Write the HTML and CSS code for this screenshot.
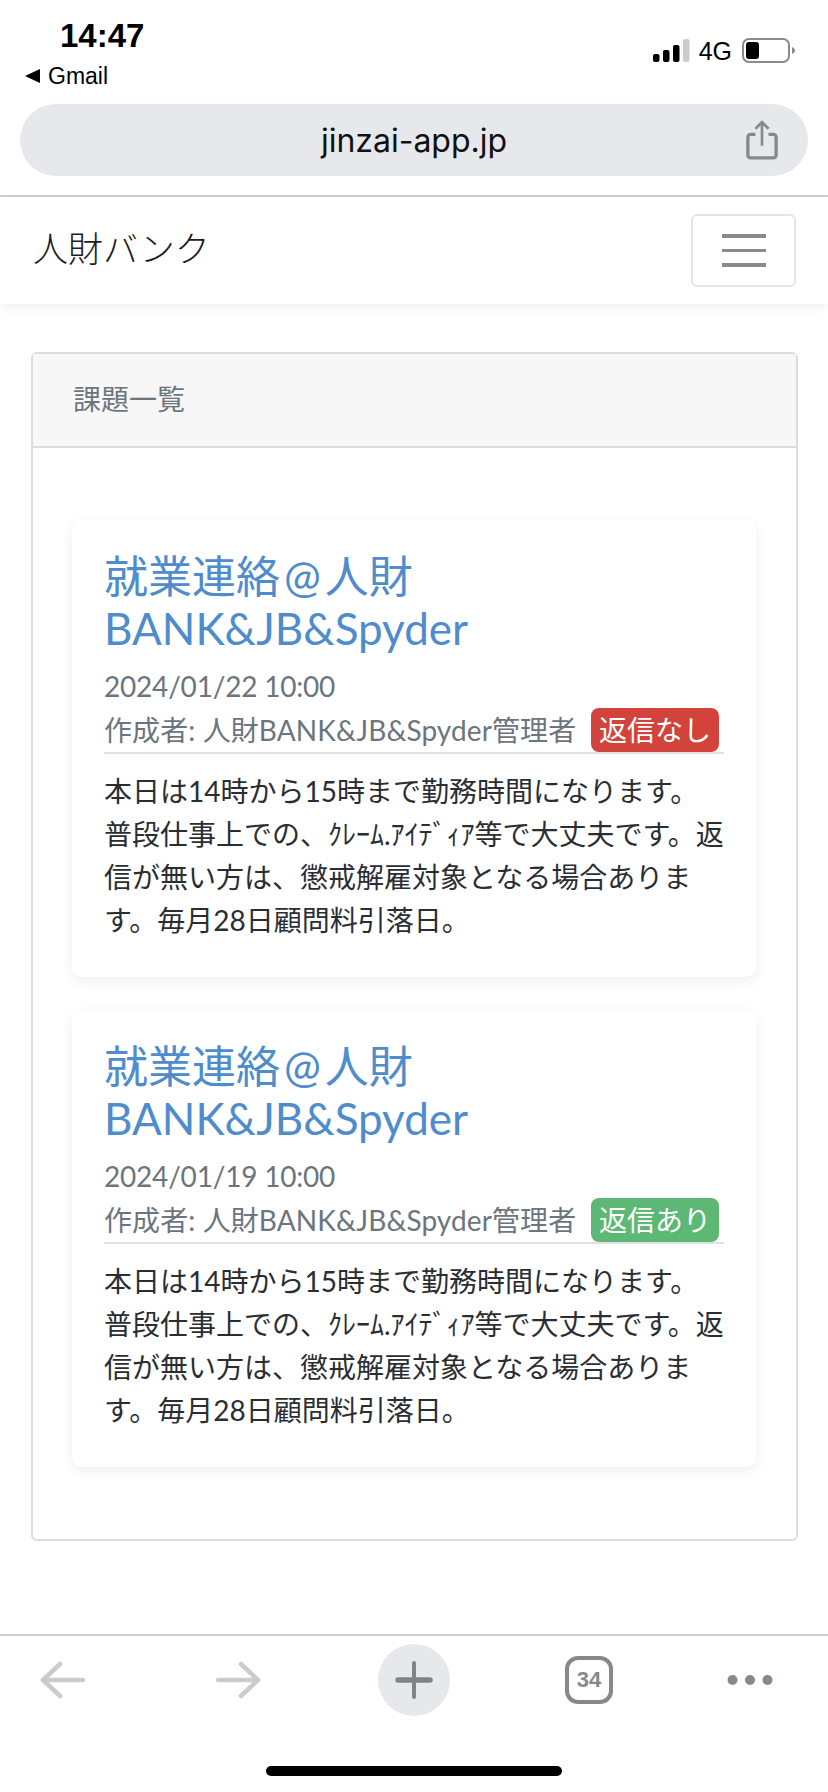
FILE: index.html
```html
<!DOCTYPE html>
<html lang="ja">
<head>
<meta charset="utf-8">
<title>人財バンク</title>
<link rel="stylesheet" href="styles.css">
</head>
<body>
<div class="page">
  <header class="status">
    <div class="status-left">
      <div class="clock">14:47</div>
      <div class="back-app"><span class="back-tri"></span>Gmail</div>
    </div>
    <div class="status-right">
      <svg class="signal" width="37" height="24" viewBox="0 0 37 24"><rect x="0" y="15" width="6.500" height="8" rx="2" fill="#000"/><rect x="10" y="11" width="6.500" height="12" rx="2" fill="#000"/><rect x="20" y="6" width="6.500" height="17" rx="2" fill="#000"/><rect x="30" y="0" width="6.500" height="23" rx="2" fill="#ccc"/></svg>
      <span class="net">4G</span>
      <svg class="battery" width="53" height="26" viewBox="0 0 53 26"><rect x="1" y="1" width="46" height="23" rx="6" fill="none" stroke="#8a8a8a" stroke-width="2"/><rect x="4" y="4" width="13" height="17" rx="3" fill="#000"/><path d="M50 9c2 1 3 2 3 3.500s-1 2.500-3 3.500z" fill="#8a8a8a"/></svg>
    </div>
  </header>
  <div class="url-wrap">
    <div class="url-bar">
      <span class="url">jinzai-app.jp</span>
      <svg class="share" width="32" height="40" viewBox="0 0 34 42" fill="none" stroke="#85888c" stroke-width="3.500"><path d="M10 15H5a3 3 0 0 0-3 3v19a3 3 0 0 0 3 3h24a3 3 0 0 0 3-3V18a3 3 0 0 0-3-3h-5"/><path d="M17 27V3M10 9l7-7 7 7" stroke-width="2.800"/></svg>
    </div>
  </div>
  <nav class="navbar">
    <span class="brand">人財バンク</span>
    <button class="toggler" type="button"><span class="bar"></span><span class="bar"></span><span class="bar"></span></button>
  </nav>
  <main class="content">
    <section class="panel">
      <div class="panel-head">課題一覧</div>
      <div class="panel-body">
        <article class="item">
          <a class="item-title"><span>就業連絡</span><span class="at">@</span><span>人財</span><span>BANK&amp;JB&amp;Spyder</span></a>
          <div class="meta">2024/01/22 10:00</div>
          <div class="author"><span class="by">作成者: 人財BANK&amp;JB&amp;Spyder管理者</span><span class="badge badge-red">返信なし</span></div>
          <p class="item-text">本日は14時から15時まで勤務時間になります。普段仕事上での、ｸﾚｰﾑ.ｱｲﾃﾞｨｱ等で大丈夫です。返信が無い方は、懲戒解雇対象となる場合あります。毎月28日顧問料引落日。</p>
        </article>
        <article class="item">
          <a class="item-title"><span>就業連絡</span><span class="at">@</span><span>人財</span><span>BANK&amp;JB&amp;Spyder</span></a>
          <div class="meta">2024/01/19 10:00</div>
          <div class="author"><span class="by">作成者: 人財BANK&amp;JB&amp;Spyder管理者</span><span class="badge badge-green">返信あり</span></div>
          <p class="item-text">本日は14時から15時まで勤務時間になります。普段仕事上での、ｸﾚｰﾑ.ｱｲﾃﾞｨｱ等で大丈夫です。返信が無い方は、懲戒解雇対象となる場合あります。毎月28日顧問料引落日。</p>
        </article>
      </div>
    </section>
  </main>
  <footer class="toolbar">
    <div class="tools">
      <svg width="46" height="38" viewBox="0 0 46 38" fill="none" stroke="#cbcbcb" stroke-width="4.500" stroke-linecap="round" stroke-linejoin="round"><path d="M43 19H3M20 3L3 19l17 16"/></svg>
      <svg width="46" height="38" viewBox="0 0 46 38" fill="none" stroke="#cbcbcb" stroke-width="4.500" stroke-linecap="round" stroke-linejoin="round"><path d="M3 19h40M26 3l17 16-17 16"/></svg>
      <div class="plus"><svg width="38" height="38" viewBox="0 0 38 38" fill="none" stroke="#80848a" stroke-width="4" stroke-linecap="round"><path d="M19 2v34"/><path d="M3 19h32" stroke-width="5.500"/></svg></div>
      <div class="tabs">34</div>
      <svg width="46" height="12" viewBox="0 0 46 12" fill="#85888d"><circle cx="5.500" cy="6" r="5"/><circle cx="23" cy="6" r="5"/><circle cx="40.500" cy="6" r="5"/></svg>
    </div>
    <div class="home-bar"></div>
  </footer>
</div>
</body>
</html>
```

FILE: styles.css
```css
* { box-sizing: border-box; }
html, body { margin: 0; padding: 0; }
body { background: #fff; color: #212529; font-family: "Lato", "Noto Sans CJK JP", sans-serif; }
.page { width: 828px; height: 1792px; display: flex; flex-direction: column; overflow: hidden; }

.status { height: 104px; padding: 20px 33px 0 25px; display: flex; justify-content: space-between; align-items: flex-start; font-family: "Liberation Sans", sans-serif; color: #000; }
.status-left { display: flex; flex-direction: column; }
.clock { font-size: 33px; font-weight: 700; line-height: 32px; margin-left: 35px; }
.back-app { display: flex; align-items: center; font-size: 23px; line-height: 24px; margin-top: 12px; }
.back-tri { width: 0; height: 0; border-style: solid; border-width: 7px 15px 7px 0; border-color: transparent #000 transparent transparent; margin-right: 8px; }
.status-right { display: flex; align-items: center; margin-top: 18px; }
.signal { margin-right: 9px; }
.net { font-size: 25px; line-height: 26px; margin-right: 10px; }

.url-wrap { height: 93px; padding: 0 20px; border-bottom: 2px solid #ccc; }
.url-bar { height: 72px; border-radius: 36px; background: #e7e8ec; display: flex; align-items: center; justify-content: center; position: relative; }
.url { font-family: "Inter", sans-serif; font-size: 32px; color: #111; }
.share { position: absolute; right: 30px; top: 16px; }

.navbar { height: 107px; display: flex; align-items: center; justify-content: space-between; padding: 0 32px 0 33px; box-shadow: 0 4px 10px rgba(0,0,0,0.06); }
.brand { font-size: 35px; font-family: "Noto Sans CJK JP", sans-serif; font-weight: 300; color: #1c1c1c; margin-top: -8px; }
.toggler { width: 105px; height: 73px; background: #fff; border: 2px solid #e5e5e5; border-radius: 6px; display: flex; flex-direction: column; align-items: center; justify-content: center; gap: 11px; padding: 0; }
.bar { display: block; width: 44px; height: 3.500px; background: #8a8a8a; }

.content { flex: 1; padding: 48px 30px 0 31px; }
.panel { border: 2px solid #dcdcdc; border-radius: 6px; height: 1189px; }
.panel-head { height: 94px; padding: 0 40px 4px; background: #f7f7f7; border-bottom: 2px solid #dcdcdc; display: flex; align-items: center; font-size: 28px; color: #6c757d; }
.panel-body { padding: 72px 40px 0 39px; display: flex; flex-direction: column; gap: 33px; }
.item { height: 457px; padding: 30px 32px 0; border-radius: 10px; background: #fff; box-shadow: 0 4px 14px rgba(0,0,0,0.07); }
.item-title { display: block; font-size: 44px; line-height: 52px; color: #4e8ccb; }
.at { margin: 0 4px; }
.meta { margin-top: 14px; font-size: 28px; letter-spacing: -0.2px; line-height: 36px; color: #6c757d; }
.author { display: flex; align-items: flex-end; justify-content: space-between; padding-right: 5px; height: 50px; border-bottom: 2px solid #dfe1e6; font-size: 28px; line-height: 44px; color: #6c757d; }
.by { letter-spacing: 0.1px; }
.badge { color: #fff; padding: 0 8px; border-radius: 8px; }
.badge-red { background: #d2433b; }
.badge-green { background: #5cb874; }
.item-text { margin: 16px 0 0; font-size: 28px; line-height: 43px; color: #2a2e33; }

.toolbar { height: 158px; border-top: 2px solid #ccc; display: flex; flex-direction: column; align-items: center; }
.tools { width: 100%; height: 88px; display: grid; grid-template-columns: 126px 224px 128px 222px 100px; align-items: center; justify-items: center; }
.plus { width: 72px; height: 72px; border-radius: 50%; background: #e7e8ec; display: flex; align-items: center; justify-content: center; }
.tabs { width: 48px; height: 48px; border: 4px solid #85888d; border-radius: 13px; display: flex; align-items: center; justify-content: center; font-family: "Liberation Sans", sans-serif; font-size: 22px; font-weight: 700; color: #85888d; }
.home-bar { width: 296px; height: 10px; margin-top: 42px; border-radius: 5px; background: #000; }
```
